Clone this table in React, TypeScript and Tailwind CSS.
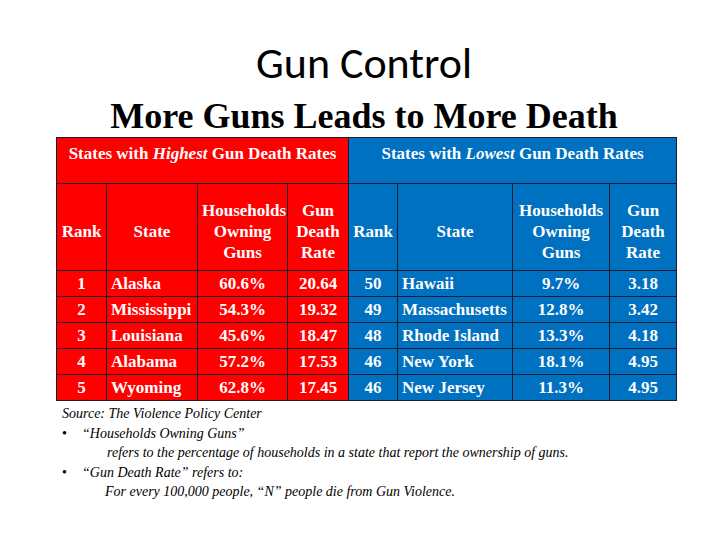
const high = [
  ["1", "Alaska", "60.6%", "20.64"],
  ["2", "Mississippi", "54.3%", "19.32"],
  ["3", "Louisiana", "45.6%", "18.47"],
  ["4", "Alabama", "57.2%", "17.53"],
  ["5", "Wyoming", "62.8%", "17.45"],
]

const low = [
  ["50", "Hawaii", "9.7%", "3.18"],
  ["49", "Massachusetts", "12.8%", "3.42"],
  ["48", "Rhode Island", "13.3%", "4.18"],
  ["46", "New York", "18.1%", "4.95"],
  ["46", "New Jersey", "11.3%", "4.95"],
]

const red = "bg-[#ff0000]"
const blue = "bg-[#0070c0]"
const cell = "border border-[#1c1c2e] px-1 leading-[21px]"

export default function App() {
  return (
    <div className="w-[728px] h-[546px] bg-white overflow-hidden">
      <div className="pt-[36px] text-center text-black">
        <h1 className="text-[44px] leading-[54px] font-[Carlito,Lato,sans-serif]">Gun Control</h1>
        <h2 className="mt-[5px] text-[36px] leading-[42px] font-bold font-[family-name:'Liberation_Serif',serif]">
          More Guns Leads to More Death
        </h2>
      </div>

      <table className="ml-[56px] w-[620px] table-fixed border-collapse text-white font-bold text-[17px] font-[family-name:'Liberation_Serif',serif]">
        <colgroup>
          <col className="w-[50px]" />
          <col className="w-[91px]" />
          <col className="w-[90px]" />
          <col className="w-[61px]" />
          <col className="w-[49px]" />
          <col className="w-[115px]" />
          <col className="w-[97px]" />
          <col className="w-[67px]" />
        </colgroup>
        <thead>
          <tr className="h-[46px]">
            <th colSpan={4} className={`${cell} ${red} align-top pt-[5px]`}>
              States with <i>Highest</i> Gun Death Rates
            </th>
            <th colSpan={4} className={`${cell} ${blue} align-top pt-[5px]`}>
              States with <i>Lowest</i> Gun Death Rates
            </th>
          </tr>
          <tr className="h-[87px]">
            {[red, blue].map((bg) => (
              <>
                <th className={`${cell} ${bg} pt-[8px]`}>Rank</th>
                <th className={`${cell} ${bg} pt-[8px]`}>State</th>
                <th className={`${cell} ${bg} pt-[8px]`}>
                  Households
                  <br />
                  Owning
                  <br />
                  Guns
                </th>
                <th className={`${cell} ${bg} pt-[8px]`}>
                  Gun
                  <br />
                  Death
                  <br />
                  Rate
                </th>
              </>
            ))}
          </tr>
        </thead>
        <tbody>
          {high.map((h, i) => {
            const l = low[i]
            return (
              <tr key={i} className="h-[26px]">
                <td className={`${cell} ${red} text-center`}>{h[0]}</td>
                <td className={`${cell} ${red} text-left`}>{h[1]}</td>
                <td className={`${cell} ${red} text-center`}>{h[2]}</td>
                <td className={`${cell} ${red} text-center`}>{h[3]}</td>
                <td className={`${cell} ${blue} text-center`}>{l[0]}</td>
                <td className={`${cell} ${blue} text-left`}>{l[1]}</td>
                <td className={`${cell} ${blue} text-center`}>{l[2]}</td>
                <td className={`${cell} ${blue} text-center`}>{l[3]}</td>
              </tr>
            )
          })}
        </tbody>
      </table>

      <div className="ml-[62px] mt-[3px] italic text-[14px] leading-[19.5px] text-black font-[family-name:'Liberation_Serif',serif]">
        <p>Source: The Violence Policy Center</p>
        <div className="flex">
          <span className="w-[20px] not-italic">•</span>
          <span>“Households Owning Guns”</span>
        </div>
        <p className="pl-[45px]">refers to the percentage of households in a state that report the ownership of guns.</p>
        <div className="flex">
          <span className="w-[20px] not-italic">•</span>
          <span>“Gun Death Rate” refers to:</span>
        </div>
        <p className="pl-[43px]">For every 100,000 people, “N” people die from Gun Violence.</p>
      </div>
    </div>
  )
}
